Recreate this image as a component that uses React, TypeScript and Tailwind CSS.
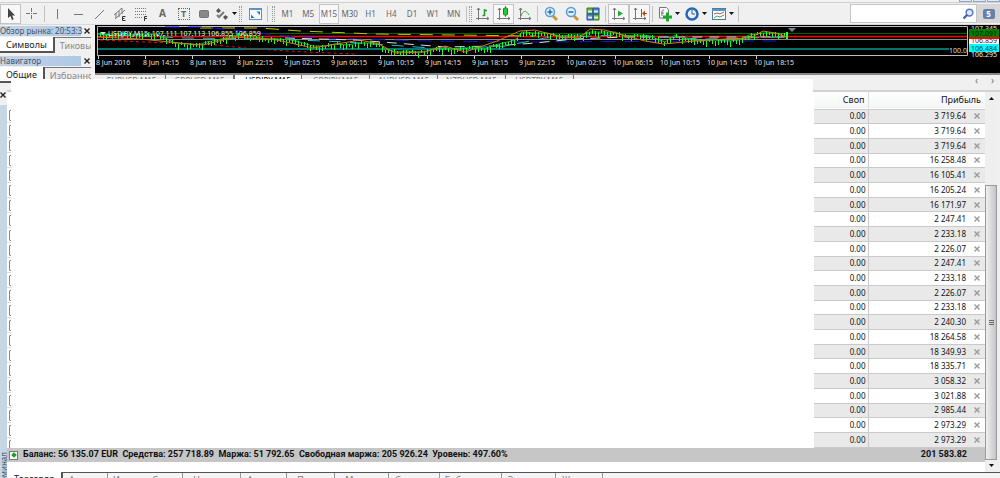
import type { ReactNode } from "react";

const TIME_LABELS = [
  "8 Jun 2016",
  "8 Jun 14:15",
  "8 Jun 18:15",
  "8 Jun 22:15",
  "9 Jun 02:15",
  "9 Jun 06:15",
  "9 Jun 10:15",
  "9 Jun 14:15",
  "9 Jun 18:15",
  "9 Jun 22:15",
  "10 Jun 02:15",
  "10 Jun 06:15",
  "10 Jun 10:15",
  "10 Jun 14:15",
  "10 Jun 18:15",
];

const PROFITS = [
  "3 719.64",
  "3 719.64",
  "3 719.64",
  "16 258.48",
  "16 105.41",
  "16 205.24",
  "16 171.97",
  "2 247.41",
  "2 233.18",
  "2 226.07",
  "2 247.41",
  "2 233.18",
  "2 226.07",
  "2 233.18",
  "2 240.30",
  "18 264.58",
  "18 349.93",
  "18 335.71",
  "3 058.32",
  "3 021.88",
  "2 985.44",
  "2 973.29",
  "2 973.29",
];

const TIMEFRAMES = ["M1", "M5", "M15", "M30", "H1", "H4", "D1", "W1", "MN"];
const CHART_TABS = ["EURUSD,M15", "GBPUSD,M15", "USDJPY,M15", "GBPJPY,M15", "AUDUSD,M15", "NZDUSD,M15", "USDTRY,M15"];

const TERMINAL_TABS = [
  { label: "Активы", width: "w-[45px]" },
  { label: "История Счета", width: "w-[75px]" },
  { label: "Новости", width: "w-[58px]" },
  { label: "Алерты", width: "w-[46px]" },
  { label: "Почта", width: "w-12" },
  { label: "Маркет", width: "w-[54px]" },
  { label: "Сигналы", width: "w-[51px]" },
  { label: "Библиотека", width: "w-[62px]" },
  { label: "Эксперты", width: "w-[54px]" },
  { label: "Журнал", width: "w-[47px]" },
];

// x, y of the closing price along the visible window
const PRICE: Array<[number, number]> = [
  [2, 8], [12, 11], [25, 8], [38, 10], [50, 9], [62, 10], [72, 14], [80, 18],
  [92, 19], [102, 20], [112, 17], [122, 15], [134, 12], [146, 9], [160, 12], [172, 14],
  [184, 14], [196, 15], [208, 18], [218, 21], [230, 21], [240, 19], [252, 20], [264, 18],
  [274, 18], [284, 18], [290, 24], [302, 27], [312, 26], [322, 27], [332, 26], [342, 23],
  [354, 24], [366, 24], [378, 22], [390, 24], [400, 20], [412, 17], [420, 15], [427, 7],
  [440, 8], [452, 8], [466, 11], [478, 10], [488, 10], [494, 7], [506, 7], [520, 7],
  [530, 11], [544, 10], [556, 11], [562, 14], [570, 17], [580, 10], [590, 14], [604, 16],
  [620, 15], [632, 16], [644, 15], [654, 10], [668, 8], [680, 8], [692, 9],
];

const SLOW_AVERAGE: Array<[number, number]> = [
  [3, 12], [45, 14], [85, 18], [108, 20], [140, 12], [182, 15], [218, 23], [265, 15],
  [284, 19], [300, 28], [330, 27], [350, 21], [370, 27], [402, 16], [425, 6], [440, 5],
  [470, 13], [485, 12], [495, 4], [510, 5], [528, 10], [550, 16], [568, 19], [600, 16],
  [630, 14], [655, 13], [668, 6], [680, 8], [692, 12],
];

function linePath(points: Array<[number, number]>) {
  return points.map(([x, y], index) => `${index === 0 ? "M" : "L"} ${x} ${y}`).join(" ");
}

function priceAt(x: number) {
  const next = PRICE.findIndex((point) => point[0] >= x);
  if (next <= 0) {
    return PRICE[0][1];
  }
  const [x1, y1] = PRICE[next - 1];
  const [x2, y2] = PRICE[next];
  return y1 + ((x - x1) / (x2 - x1)) * (y2 - y1);
}

const CANDLES = Array.from({ length: 230 }, (_value, index) => {
  const x = 2 + index * 3;
  const jitter = ((index * 37) % 11) / 4 - 1;
  const height = 3 + ((index * 17) % 4);
  return { x, y: Math.round(priceAt(x) + jitter), height };
});

function Icon({ children, size = 16 }: { children: ReactNode; size?: number }) {
  return (
    <svg viewBox="0 0 16 16" width={size} height={size} fill="none" stroke="#777" className="shrink-0" aria-hidden="true">
      {children}
    </svg>
  );
}

function ToolButton({ label, active, wide, children }: { label: string; active?: boolean; wide?: boolean; children: ReactNode }) {
  return (
    <button
      type="button"
      aria-label={label}
      className={`flex h-5 shrink-0 items-center justify-center gap-[2px] ${wide ? "w-[27px]" : "w-[21px]"} ${
        active ? "border border-[#c4c4c4] bg-[#f8f8f8]" : ""
      }`}
    >
      {children}
    </button>
  );
}

function Grip() {
  return <span className="h-4 w-[3px] shrink-0 border-x border-dotted border-[#999]" />;
}

function Divider() {
  return <span className="mx-[2px] h-4 w-px shrink-0 bg-[#c2c2c2]" />;
}

function Caret() {
  return (
    <svg viewBox="0 0 5 3" width="5" height="3" className="shrink-0" aria-hidden="true">
      <path d="M0 0h5L2.500 3z" fill="#111" />
    </svg>
  );
}

function Cross() {
  return (
    <svg viewBox="0 0 6 6" width="6" height="6" fill="none" stroke="currentColor" aria-hidden="true">
      <path d="M.5.5l5 5M5.500.5l-5 5" strokeWidth="1.400" />
    </svg>
  );
}

function Toolbar() {
  return (
    <div className="flex h-[22px] items-center border-b border-[#d9d9d9] bg-[#f0f0f0]">
      <ToolButton label="Курсор" active>
        <Icon>
          <path d="M5 2v10l2.400-2 1.600 4 1.700-.7-1.600-3.800H12z" fill="#444" stroke="none" />
        </Icon>
      </ToolButton>
      <ToolButton label="Перекрестие">
        <Icon>
          <path d="M7.500 2v4M7.500 9v4M2 7.500h4M9 7.500h4M7 7.500h1" />
        </Icon>
      </ToolButton>
      <Divider />

      <div className="flex w-[165px] items-center justify-between">
        <ToolButton label="Вертикальная линия">
          <Icon>
            <path d="M7.500 3v10" />
          </Icon>
        </ToolButton>
        <ToolButton label="Горизонтальная линия">
          <Icon>
            <path d="M3 8.500h9" />
          </Icon>
        </ToolButton>
        <ToolButton label="Трендовая линия">
          <Icon>
            <path d="M3 13 12 4" />
          </Icon>
        </ToolButton>
        <ToolButton label="Каналы">
          <Icon>
            <path d="M1 9 9 2M2 13 12 4M3 7v5M6 5v6M9 2v6" />
            <path d="M12.500 10.500h-3v4h3M9.500 12.500h2" stroke="#333" />
          </Icon>
        </ToolButton>
        <ToolButton label="Фибоначчи">
          <Icon>
            <path d="M1 2.500h11M1 5.500h11M1 8.500h11M1 11.500h7" strokeDasharray="1 1" />
            <path d="M10.500 15v-4.500H13M10.500 12.500H13" stroke="#333" />
          </Icon>
        </ToolButton>
        <ToolButton label="Текст">
          <span className="text-[10px] font-bold text-[#666]">A</span>
        </ToolButton>
        <ToolButton label="Метка">
          <span className="flex h-3 w-3 items-center justify-center border border-dotted border-[#666] text-[9px] font-bold text-[#666]">T</span>
        </ToolButton>
        <ToolButton label="Фигура">
          <Icon>
            <rect x="2.500" y="4.500" width="9" height="7" rx="1" fill="#888" />
          </Icon>
        </ToolButton>
      </div>
      <ToolButton label="Стрелки" wide>
        <Icon>
          <path d="m2 5 2.500-3L7 5 4.500 7zM9 11l2.500-2L14 11l-2.500 3z" fill="#555" stroke="none" />
          <path d="m3 9 2 2 5-5" strokeWidth="2" />
        </Icon>
        <Caret />
      </ToolButton>

      <Grip />
      <div className="flex items-center pl-[2px]">
        <ToolButton label="Полный экран">
          <Icon>
            <rect x="2.500" y="2.500" width="12" height="11" fill="#f4faff" stroke="#5a93c8" />
            <path d="M2 3h13" stroke="#5a93c8" strokeWidth="2" />
            <path d="M4 12V8.500L7.500 12zM13 5.500V9L9.500 5.500z" fill="#2f6fae" stroke="none" />
          </Icon>
        </ToolButton>
        <Divider />
      </div>
      <div className="flex items-center px-[2px]">
        <Grip />
      </div>

      <div className="flex w-[187px] items-center text-[8px] text-[#666]">
        {TIMEFRAMES.map((frame) => (
          <button
            type="button"
            key={frame}
            className={`h-5 flex-1 border ${frame === "M15" ? "border-[#c4c4c4] bg-[#f8f8f8]" : "border-transparent"}`}
          >
            {frame}
          </button>
        ))}
      </div>

      <Divider />
      <Grip />
      <ToolButton label="Бары">
        <Icon>
          <path d="M3.500 2v12M1 12.500h13M2 4l1.500-2L5 4M12 11l2 1.500-2 1.500" />
          <path d="M9.500 3v7M7.500 9.500h2M9.500 4.500H12" stroke="#1d9a35" strokeWidth="1.500" />
        </Icon>
      </ToolButton>
      <ToolButton label="Свечи" active>
        <Icon>
          <path d="M3.500 2v12M1 12.500h13M2 4l1.500-2L5 4M12 11l2 1.500-2 1.500M9.500 0v11" />
          <rect x="7.500" y="2" width="4" height="7" rx="1" fill="#22cc38" stroke="#158c25" />
        </Icon>
      </ToolButton>
      <ToolButton label="Линия">
        <Icon>
          <path d="M3.500 2v12M1 12.500h13M2 4l1.500-2L5 4M12 11l2 1.500-2 1.500" />
          <path d="M4 10c2-6 5-6 8-1" stroke="#3aa34b" />
        </Icon>
      </ToolButton>
      <Divider />
      <ToolButton label="Увеличить">
        <Icon>
          <path d="m10 10 4 4" stroke="#c89b36" strokeWidth="3" />
          <circle cx="7" cy="6" r="4.500" fill="#dff0ff" stroke="#5b9bd8" strokeWidth="1.500" />
          <path d="M4.500 6h5M7 3.500v5" stroke="#2468ac" strokeWidth="1.500" />
        </Icon>
      </ToolButton>
      <ToolButton label="Уменьшить">
        <Icon>
          <path d="m10 10 4 4" stroke="#c89b36" strokeWidth="3" />
          <circle cx="7" cy="6" r="4.500" fill="#dff0ff" stroke="#5b9bd8" strokeWidth="1.500" />
          <path d="M4.500 6h5" stroke="#2468ac" strokeWidth="1.500" />
        </Icon>
      </ToolButton>
      <ToolButton label="Окна">
        <Icon>
          <path d="M2 2h6v6H2zM8 8h6v6H8z" fill="#62b340" stroke="#397d25" />
          <path d="M8 2h6v6H8zM2 8h6v6H2z" fill="#4d83d0" stroke="#264f98" />
          <path d="M3 5.500h4M9 5.500h4M3 11.500h4M9 11.500h4" stroke="#e4f0dc" strokeWidth="2" />
        </Icon>
      </ToolButton>
      <Divider />
      <ToolButton label="Автопрокрутка" active>
        <Icon>
          <path d="M3.500 2v12M1 12.500h13M2 4l1.500-2L5 4M12 11l2 1.500-2 1.500" />
          <path d="M7 4.500v6l5-3z" fill="#23a83b" stroke="none" />
        </Icon>
      </ToolButton>
      <ToolButton label="Сдвиг графика" active>
        <Icon>
          <path d="M3.500 2v12M1 12.500h13M2 4l1.500-2L5 4M12 11l2 1.500-2 1.500" />
          <path d="M9.500 3v8" stroke="#3a6ea5" />
          <path d="m10 7.500 3-3v6z" fill="#c34a20" stroke="none" />
          <path d="M12 7.500h3" stroke="#c34a20" />
        </Icon>
      </ToolButton>
      <Divider />
      <ToolButton label="Индикаторы" wide>
        <Icon>
          <path d="M2.500 1.500h7l2 2V12h-9z" fill="#f8f8f8" />
          <path d="M5 10V5.500Q5 4 7 4M4 7h3" />
          <path d="M6 11h9M10.500 6.500v9" stroke="#21a530" strokeWidth="3" />
        </Icon>
        <Caret />
      </ToolButton>
      <ToolButton label="Периоды" wide>
        <Icon>
          <circle cx="8" cy="8" r="5.500" fill="#e6f2ff" stroke="#2668b8" strokeWidth="2.500" />
          <path d="M8 4v4h3" stroke="#555" />
        </Icon>
        <Caret />
      </ToolButton>
      <ToolButton label="Шаблоны" wide>
        <Icon>
          <rect x="1.500" y="2.500" width="13" height="11" fill="#fff" stroke="#4a7aa8" />
          <path d="M1 4h14" stroke="#5b91c9" strokeWidth="2" />
          <path d="m3 8 3-1 3 1 4-2" stroke="#a65c49" />
          <path d="m3 12 3-2 3 1 4-2" stroke="#4a9a57" />
        </Icon>
        <Caret />
      </ToolButton>
      <Divider />

      <div className="ml-auto flex items-center">
        <label className="flex h-[19px] w-[127px] items-center border border-[#c6c6c6] bg-white pr-[2px]">
          <input type="text" aria-label="Поиск" className="min-w-0 flex-1 bg-transparent text-[8px] outline-none" />
          <Icon size={12}>
            <circle cx="10" cy="6" r="4.500" fill="#dfe9ff" stroke="#5577c8" strokeWidth="2" />
            <path d="m7 9-5 5" stroke="#3f5fb0" strokeWidth="3" />
          </Icon>
        </label>
        <button type="button" aria-label="Сообщения" className="flex h-[19px] w-[23px] items-center justify-center bg-[#d6d6d6]">
          <span className="flex h-[10px] w-3 items-center justify-center rounded-[2px] bg-[#687fac] text-[8px] font-bold text-white">5</span>
        </button>
      </div>
    </div>
  );
}

function PanelTitle({ title }: { title: string }) {
  return (
    <div className="flex h-3 items-center justify-between bg-[#f0f0f0]">
      <div className="h-[10px] w-[81px] bg-linear-to-r from-[#c5d4e3] to-[#aec8e6] text-[8px] leading-[10px] whitespace-nowrap text-[#41546a]">
        {title}
      </div>
      <button type="button" aria-label="Закрыть" className="w-[7px] text-[#222]">
        <Cross />
      </button>
    </div>
  );
}

function PanelTabs({ active, other }: { active: string; other: string }) {
  return (
    <div className="flex h-[19px] overflow-hidden text-[9px] leading-4 whitespace-nowrap">
      <button type="button" className="h-4 border-r-2 border-b-2 border-[#555] bg-white px-[6px] text-[#222]">
        {active}
      </button>
      <button type="button" className="h-4 min-w-0 flex-1 overflow-hidden border-t border-[#777] pl-[5px] text-left text-[#888]">
        {other}
      </button>
    </div>
  );
}

function Chart() {
  return (
    <div className="min-w-0 flex-1 overflow-hidden bg-black">
      <svg viewBox="0 0 905 46" className="block h-auto w-full" fontFamily="'Noto Sans', sans-serif" fontSize="7">
        <rect width="905" height="46" fill="#000" />
        <path d="M2.500 30.500V1.500H872.500V30.500z" fill="none" stroke="#bbb" />
        <path d="M3 8.500H872" stroke="#006400" />
        <path d="M3 11.500H872" stroke="#f00" strokeWidth="1.500" />
        <path d="M3 14.500H872" stroke="#888" />
        <path d="M3 24H854" stroke="#007474" strokeWidth="2" />
        <path d="M105 3H165L205 6 280 9 440 11" fill="none" stroke="#c9c400" strokeDasharray="13 9" />
        <path d="M70 2H110L200 12 330 16 440 17 620 16 690 16" fill="none" stroke="#1118d8" strokeDasharray="14 9" />
        <path d="M190 13 260 15 300 18 350 22 400 21 440 18 480 14 530 12 690 12" fill="none" stroke="#ddd" strokeDasharray="10 7" />
        <path d="M3 9 90 13 180 14 250 17 350 24 410 21 450 13 520 10 610 14 690 12" fill="none" stroke="#14c7ce" strokeDasharray="12 9" />
        <path d="M5 15 120 20 160 24 210 27 260 29" fill="none" stroke="#d11" strokeDasharray="3 3" />
        <path d={linePath(PRICE)} fill="none" stroke="#00bd20" />
        {CANDLES.map((candle, index) => (
          <path key={index} d={`M${candle.x + 0.5} ${candle.y - 1}v${candle.height}`} stroke="#17ff21" />
        ))}
        <path d={linePath(SLOW_AVERAGE)} fill="none" stroke="#d57b13" />
        <path d="M692 7v7" stroke="#38ff20" strokeWidth="2" />
        <path d="M693 3h8l-4 4z" fill="#788591" />
        <path d="M5 7h6L8 10z" fill="#ddd" />
        <text x="13" y="11" fill="#f5f5f5">
          USDJPY,M15: 107.111 107.113 106.855 106.859
        </text>
        {TIME_LABELS.map((label, index) => (
          <g key={label}>
            <path d={`M${3.5 + index * 47} 31v3`} stroke="#ccc" />
            <text x={1 + index * 47} y="40" fill="#e4e4e4">
              {label}
            </text>
          </g>
        ))}
        <text x="854" y="28" fill="#ddd">100.0</text>
        <text x="876" y="6" fill="#eee">107.345</text>
        <rect x="874" y="4" width="30" height="8" fill="#008000" />
        <text x="876" y="11" fill="#001b00">107.091</text>
        <rect x="874" y="12" width="30" height="7" fill="#fff" />
        <text x="876" y="18" fill="#222">106.859</text>
        <rect x="874" y="12" width="30" height="2" fill="#f00" />
        <text x="876" y="32" fill="#eee">106.295</text>
        <rect x="874" y="19" width="30" height="8" fill="#0ff" />
        <text x="876" y="26" fill="#003333">106.484</text>
      </svg>
    </div>
  );
}

function ChartTabs() {
  return (
    <div className="flex h-3 border-t-2 border-[#888] bg-[#f0f0f0] text-[8px] leading-[9px] whitespace-nowrap text-[#777]">
      <div className="flex min-w-0 flex-1 pl-[3px]">
        {CHART_TABS.map((tab) => (
          <button
            type="button"
            key={tab}
            className={`w-[68px] border-r border-[#777] ${tab === "USDJPY,M15" ? "border-l bg-white text-black" : ""}`}
          >
            {tab}
          </button>
        ))}
      </div>
      <div className="flex w-[25px] justify-between pr-[6px] text-[10px] text-[#777]">
        <button type="button" aria-label="Назад">‹</button>
        <button type="button" aria-label="Вперёд">›</button>
      </div>
    </div>
  );
}

function Terminal() {
  return (
    <section className="flex h-[393px] bg-white">
      <aside className="flex w-[7px] shrink-0 flex-col justify-between overflow-hidden bg-[#c5d6e4]">
        <button type="button" aria-label="Закрыть терминал" className="flex h-5 items-center bg-[#f0f0f0] text-[#222]">
          <Cross />
        </button>
        <div className="flex h-[26px] items-start">
          <span className="rotate-180 text-[8px] leading-[7px] text-[#42566b] [writing-mode:vertical-rl]">Терминал</span>
        </div>
      </aside>
      <div className="flex min-w-0 flex-1 flex-col">
        <div className="h-[5px] bg-[#f0f0f0]" />
        <div className="flex h-[382px] border-t-2 border-[#d2d2d2]">
          <div className="flex min-w-0 flex-1 flex-col">
            <div className="flex h-[356px]">
              <div className="w-1 shrink-0 overflow-hidden pt-4">
                {PROFITS.map((_profit, index) => (
                  <div key={index} className="h-[15px] border-b border-[#ddd] pt-[2px] pl-[2px]">
                    <div className="h-[11px] w-2 rounded-[1px] border border-[#888]" />
                  </div>
                ))}
              </div>
              <div className="min-w-0 flex-1" />
              <table className="h-[356px] w-[171px] shrink-0 table-fixed border-collapse text-right text-[8px] leading-[12px] text-[#111]">
                <colgroup>
                  <col className="w-[54px]" />
                  <col className="w-[101px]" />
                  <col className="w-4" />
                </colgroup>
                <thead>
                  <tr className="h-[17px] border-b border-[#ccc] bg-linear-to-b from-white to-[#f4f5f7] text-[9px]">
                    <th className="border-r border-[#ddd] pr-[3px] font-normal">Своп</th>
                    <th colSpan={2} className="pr-1 font-normal">Прибыль</th>
                  </tr>
                </thead>
                <tbody>
                  {PROFITS.map((profit, index) => (
                    <tr key={index} className="border-b border-[#c9c9c9] odd:bg-[#e9e9e9]">
                      <td className="border-r border-[#c9c9c9] p-0 pr-[2px]">0.00</td>
                      <td className="p-0 pr-[3px]">{profit}</td>
                      <td className="p-0">
                        <button type="button" aria-label="Закрыть ордер" className="ml-[5px] block text-[#999]">
                          <Cross />
                        </button>
                      </td>
                    </tr>
                  ))}
                </tbody>
              </table>
            </div>
            <div className="flex h-[14px] items-center bg-[#c6c6c6] pr-[18px] pl-[2px] font-['Roboto',sans-serif] text-[9px] font-bold whitespace-pre text-[#111]">
              <span className="mr-[5px] flex h-[9px] w-[9px] items-center justify-center border border-[#777] bg-white">
                <span className="h-1 w-1 rotate-45 bg-[#16a51c]" />
              </span>
              Баланс: 56 135.07 EUR  Средства: 257 718.89  Маржа: 51 792.65  Свободная маржа: 205 926.24  Уровень: 497.60%
              <span className="ml-auto">201 583.82</span>
            </div>
          </div>
          <div className="flex w-3 shrink-0 flex-col items-center justify-between bg-[#efefef] py-1">
            <span className="flex h-1 rotate-180"><Caret /></span>
            <div className="mt-[85px] mb-1 flex w-full flex-1 items-center justify-center border border-[#999] bg-linear-to-r from-[#f0f0f0] to-[#c5c5cb]">
              <span className="flex h-[5px] w-[5px] items-center border-y border-[#666]">
                <span className="h-px w-full bg-[#666]" />
              </span>
            </div>
            <span className="flex h-1"><Caret /></span>
          </div>
          <div className="w-[3px] bg-[#f0f0f0]" />
        </div>
        <div className="flex h-[6px] overflow-hidden text-[9px] leading-[13px] text-[#777]">
          <button type="button" className="w-[54px] bg-white text-[#222]">Торговля</button>
          <div className="flex flex-1 border-t border-l-2 border-[#555] bg-[#f4f4f4]">
            {TERMINAL_TABS.map((tab) => (
              <button type="button" key={tab.label} className={`${tab.width} shrink-0 border-r border-[#999]`}>
                {tab.label}
              </button>
            ))}
          </div>
        </div>
      </div>
    </section>
  );
}

export default function App() {
  return (
    <main className="relative h-screen overflow-hidden bg-[#f0f0f0] font-['Noto_Sans',sans-serif]">
      <header className="flex h-[3px] justify-end gap-px border-b border-[#d0d0d0] bg-[#f3f3f3]">
        <button type="button" aria-label="Свернуть" className="h-[2px] w-[13px] border-x border-b border-[#8aa9cc] bg-[#dfeaf6]" />
        <button type="button" aria-label="Развернуть" className="h-[2px] w-[13px] border-x border-b border-[#8aa9cc] bg-[#dfeaf6]" />
        <button type="button" aria-label="Закрыть окно" className="h-[2px] w-[13px] border-x border-b border-[#8aa9cc] bg-[#dfeaf6]" />
      </header>
      <Toolbar />
      <div className="flex h-[60px]">
        <aside className="flex w-[95px] shrink-0 flex-col pr-1">
          <PanelTitle title="Обзор рынка: 20:53:3" />
          <PanelTabs active="Символы" other="Тиковы" />
          <PanelTitle title="Навигатор" />
          <PanelTabs active="Общие" other="Избранно" />
        </aside>
        <div className="flex min-w-0 flex-1 flex-col">
          <Chart />
          <ChartTabs />
        </div>
      </div>
      <Terminal />
      <div className="absolute top-[79px] right-[187px] bottom-[31px] left-[11px] bg-white" />
    </main>
  );
}
